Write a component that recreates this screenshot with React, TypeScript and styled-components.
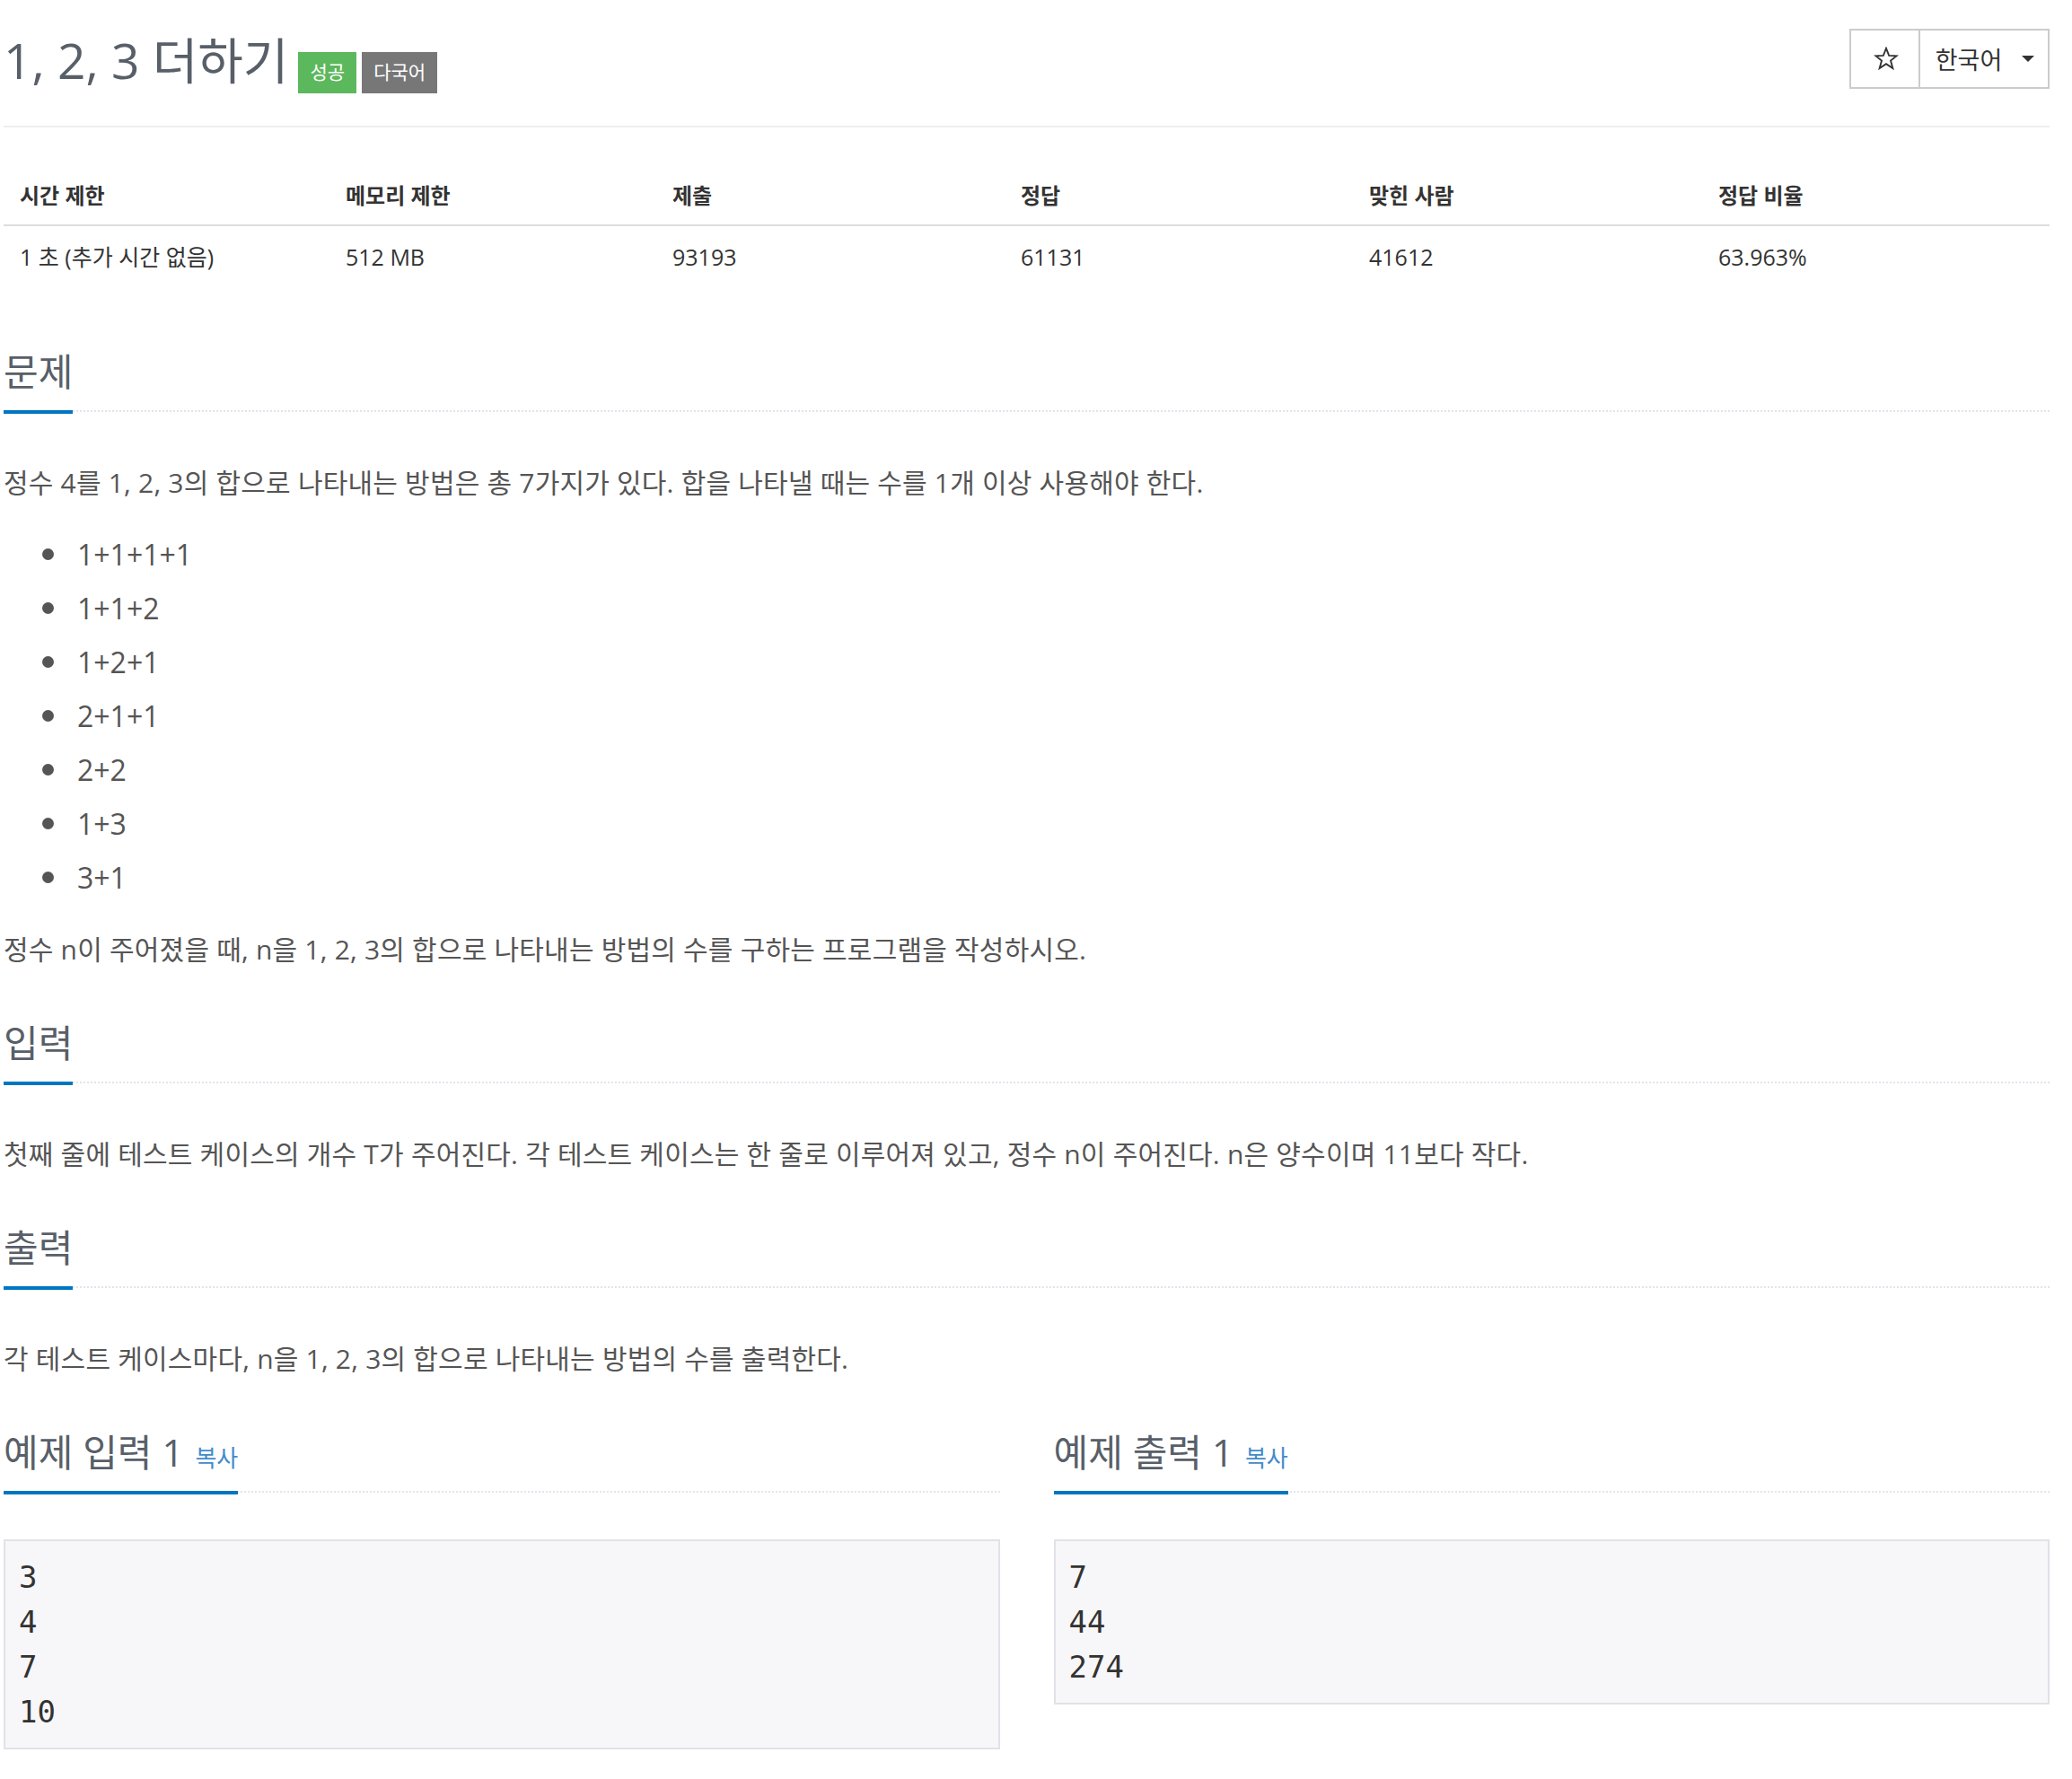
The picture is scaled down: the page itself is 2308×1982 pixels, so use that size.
import React from "react";
import styled, { createGlobalStyle } from "styled-components";

const GlobalStyle = createGlobalStyle`
  html, body { margin: 0; padding: 0; background: #fff; }
  body {
    font-family: "Open Sans", "Noto Sans CJK KR", sans-serif;
    color: #333;
  }
  * { box-sizing: border-box; }
`;

const Page = styled.div`
  width: 2279px;
  margin-left: 4px;
  padding-bottom: 30px;
`;

const Header = styled.header`
  display: flex;
  justify-content: space-between;
  align-items: flex-start;
  height: 142px;
  border-bottom: 2px solid #eee;
`;

const Title = styled.h1`
  display: flex;
  align-items: baseline;
  gap: 11px;
  margin: 0;
  padding-top: 37px;
  font-size: 55px;
  font-weight: 400;
  line-height: 59px;
  color: #585f69;
`;

const Badges = styled.span`
  display: flex;
  align-items: baseline;
  gap: 6px;
`;

const Badge = styled.span<{ $bg: string }>`
  display: inline-block;
  padding: 12px 13px 13px;
  font-size: 21px;
  line-height: 21px;
  color: #fff;
  background: ${(p) => p.$bg};
`;

const BtnGroup = styled.div`
  display: flex;
  margin-top: 32px;
`;

const Btn = styled.button<{ $w: number; $first?: boolean }>`
  display: flex;
  align-items: center;
  justify-content: center;
  gap: 22px;
  width: ${(p) => p.$w}px;
  height: 67px;
  padding: 0 0 0 2px;
  background: #fff;
  border: 2px solid #ccc;
  border-left-width: ${(p) => (p.$first ? 2 : 0)}px;
  font-family: "Open Sans", "Noto Sans CJK KR", sans-serif;
  font-size: 27px;
  color: #333;
`;

const Caret = styled.span`
  width: 0;
  height: 0;
  border-top: 7px solid #333;
  border-left: 7px solid transparent;
  border-right: 7px solid transparent;
`;

const InfoTable = styled.table`
  width: 100%;
  margin-top: 38px;
  border-collapse: separate;
  border-spacing: 0;
  table-layout: fixed;
`;

const Col = styled.col<{ $w: number }>`
  width: ${(p) => p.$w}px;
`;

const Th = styled.th`
  text-align: left;
  font-size: 24px;
  font-weight: 700;
  padding: 23px 18px 17px;
  line-height: 30px;
  border-bottom: 2px solid #ddd;
  color: #333;
`;

const Td = styled.td`
  padding: 19px 18px 29px;
  font-size: 25px;
  line-height: 30px;
  color: #333;
`;

const Section = styled.section<{ $gap: number }>`
  margin-top: ${(p) => p.$gap}px;
`;

const Headline = styled.div`
  display: flex;
  border-bottom: 2px dotted #e0e5ec;
`;

const HeadTitle = styled.h2`
  display: flex;
  align-items: baseline;
  margin: 0 0 -4px;
  padding-bottom: 20px;
  border-bottom: 4px solid #0076c0;
  font-size: 42px;
  line-height: 46px;
  font-weight: 400;
  color: #585f69;
`;

const CopyLink = styled.a`
  margin-left: 13px;
  font-size: 26px;
  line-height: 1;
  color: #428bca;
  text-decoration: none;
`;

const Body = styled.div`
  display: flex;
  flex-direction: column;
  padding-top: 57px;
`;

const Text = styled.p`
  margin: 0;
  font-size: 30px;
  line-height: 43px;
  letter-spacing: 0.2px;
  color: #555;
`;

const List = styled.ul`
  display: flex;
  flex-direction: column;
  gap: 17px;
  margin: 37px 0;
  padding: 0 0 0 43px;
  list-style: none;
`;

const Item = styled.li`
  display: flex;
  align-items: center;
  font-size: 32px;
  line-height: 43px;
  color: #555;
  &::before {
    content: "";
    width: 13px;
    height: 13px;
    margin-right: 26px;
    border-radius: 50%;
    background: #555;
  }
`;

const SampleGrid = styled.div`
  display: grid;
  grid-template-columns: 1fr 1fr;
  column-gap: 60px;
  margin-top: 60px;
`;

const Sample = styled.pre`
  margin: 52px 0 0;
  padding: 15px 15px;
  background: #f7f7f9;
  border: 2px solid #e1e1e8;
  font-family: "DejaVu Sans Mono", "Liberation Mono", monospace;
  font-size: 34px;
  line-height: 50px;
  color: #333;
`;

const StarIcon = () => (
  <svg width="28" height="27" viewBox="0 0 24 23" fill="none">
    <polygon
      points="12,1.5 14.7,8.4 22,8.7 16.3,13.3 18.3,20.5 12,16.4 5.7,20.5 7.7,13.3 2,8.7 9.3,8.4"
      stroke="#333"
      strokeWidth="1.6"
      strokeLinejoin="miter"
    />
  </svg>
);

const cols = [363, 364, 388, 388, 389, 387];
const heads = ["시간 제한", "메모리 제한", "제출", "정답", "맞힌 사람", "정답 비율"];
const vals = ["1 초 (추가 시간 없음)", "512 MB", "93193", "61131", "41612", "63.963%"];
const sums = ["1+1+1+1", "1+1+2", "1+2+1", "2+1+1", "2+2", "1+3", "3+1"];

export default function App() {
  return (
    <>
      <GlobalStyle />
      <Page>
        <Header>
          <Title>
            <span>1, 2, 3 더하기</span>
            <Badges>
              <Badge $bg="#5cb85c">성공</Badge>
              <Badge $bg="#777777">다국어</Badge>
            </Badges>
          </Title>
          <BtnGroup>
            <Btn $w={79} $first>
              <StarIcon />
            </Btn>
            <Btn $w={144}>
              <span>한국어</span>
              <Caret />
            </Btn>
          </BtnGroup>
        </Header>

        <InfoTable>
          <colgroup>
            {cols.map((w, i) => (
              <Col key={i} $w={w} />
            ))}
          </colgroup>
          <thead>
            <tr>
              {heads.map((h) => (
                <Th key={h}>{h}</Th>
              ))}
            </tr>
          </thead>
          <tbody>
            <tr>
              {vals.map((v) => (
                <Td key={v}>{v}</Td>
              ))}
            </tr>
          </tbody>
        </InfoTable>

        <Section $gap={61}>
          <Headline>
            <HeadTitle>문제</HeadTitle>
          </Headline>
          <Body>
            <Text>
              정수 4를 1, 2, 3의 합으로 나타내는 방법은 총 7가지가 있다. 합을 나타낼 때는 수를 1개 이상 사용해야 한다.
            </Text>
            <List>
              {sums.map((s) => (
                <Item key={s}>{s}</Item>
              ))}
            </List>
            <Text>정수 n이 주어졌을 때, n을 1, 2, 3의 합으로 나타내는 방법의 수를 구하는 프로그램을 작성하시오.</Text>
          </Body>
        </Section>

        <Section $gap={60}>
          <Headline>
            <HeadTitle>입력</HeadTitle>
          </Headline>
          <Body>
            <Text>
              첫째 줄에 테스트 케이스의 개수 T가 주어진다. 각 테스트 케이스는 한 줄로 이루어져 있고, 정수 n이 주어진다. n은 양수이며 11보다 작다.
            </Text>
          </Body>
        </Section>

        <Section $gap={60}>
          <Headline>
            <HeadTitle>출력</HeadTitle>
          </Headline>
          <Body>
            <Text>각 테스트 케이스마다, n을 1, 2, 3의 합으로 나타내는 방법의 수를 출력한다.</Text>
          </Body>
        </Section>

        <SampleGrid>
          <section>
            <Headline>
              <HeadTitle>
                예제 입력 1<CopyLink href="#">복사</CopyLink>
              </HeadTitle>
            </Headline>
            <Sample>{"3\n4\n7\n10"}</Sample>
          </section>
          <section>
            <Headline>
              <HeadTitle>
                예제 출력 1<CopyLink href="#">복사</CopyLink>
              </HeadTitle>
            </Headline>
            <Sample>{"7\n44\n274"}</Sample>
          </section>
        </SampleGrid>
      </Page>
    </>
  );
}
